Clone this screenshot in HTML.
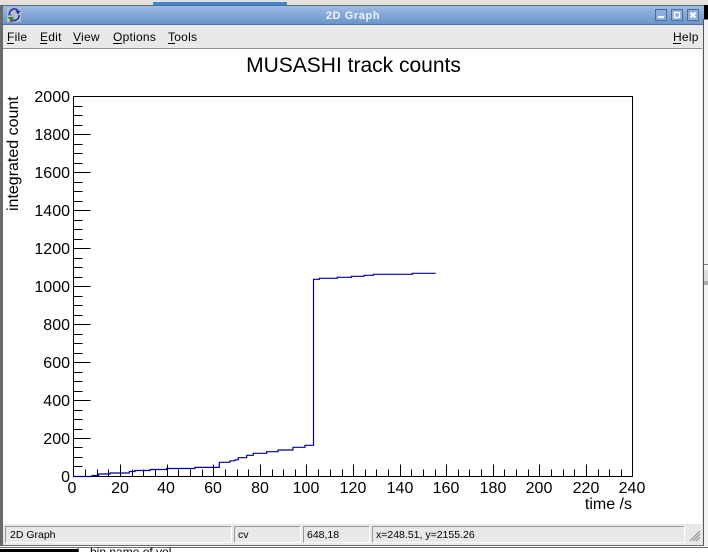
<!DOCTYPE html>
<html>
<head>
<meta charset="utf-8">
<style>
html,body{margin:0;padding:0;width:708px;height:552px;overflow:hidden;background:#e4e0da}
svg{display:block;position:absolute;left:0;top:0}
text{font-family:"Liberation Sans",sans-serif;fill:#000}
</style>
</head>
<body>
<svg width="708" height="552" viewBox="0 0 708 552" xmlns="http://www.w3.org/2000/svg">
<defs>
<linearGradient id="tb" x1="0" y1="0" x2="0" y2="1">
<stop offset="0" stop-color="#9dbbe4"/>
<stop offset="1" stop-color="#6c94c8"/>
</linearGradient>
</defs>
<!-- desktop -->
<rect x="0" y="0" width="708" height="552" fill="#e4e0da"/>
<rect x="153" y="2" width="134" height="3" fill="#3d86dc"/>
<rect x="704" y="5" width="4" height="14" fill="#000"/>
<rect x="704" y="19" width="4" height="533" fill="#f2f2f2"/>
<rect x="704" y="19" width="4" height="1" fill="#777"/>
<rect x="704" y="264" width="4" height="1" fill="#777"/>
<rect x="704" y="270" width="4" height="11" fill="#ddd"/>
<rect x="704" y="281" width="4" height="4" fill="#aaa"/>
<!-- window -->
<rect x="0" y="5" width="704" height="543" fill="#e8e8e8"/>
<rect x="0" y="5" width="704" height="1" fill="#5d6a7c"/>
<rect x="0" y="6" width="704" height="18" fill="url(#tb)"/>
<rect x="0" y="24" width="704" height="1" fill="#4f74a6"/>
<rect x="0" y="6" width="3" height="542" fill="#6a6a6a"/>
<rect x="703" y="19" width="1" height="529" fill="#555"/>
<!-- icon -->
<rect x="7" y="8" width="14" height="14" fill="#b9bdc4"/>
<path d="M9.5 15a5 5 0 0 1 8.5-4.5M19 15a5 5 0 0 1-8.5 4" fill="none" stroke="#1a2fb0" stroke-width="1.6"/>
<path d="M16 11h4l-2 3zM8 15h4" fill="#1a2fb0" stroke="#1a2fb0" stroke-width=".6"/>
<path d="M8 17h6l-1 2H9z" fill="#149a20"/>
<rect x="10" y="19" width="2" height="3" fill="#a04a10"/>
<text x="353" y="19" text-anchor="middle" font-size="11" font-weight="bold" style="fill:#eef3fa;letter-spacing:.6px">2D Graph</text>
<!-- window buttons -->
<g fill="none" stroke="#4a6f9f" stroke-width="1">
<rect x="655.5" y="9.5" width="11" height="11" fill="#8eaedb"/>
<rect x="671.5" y="9.5" width="11" height="11" fill="#8eaedb"/>
<rect x="687.5" y="9.5" width="11" height="11" fill="#8eaedb"/>
</g>
<rect x="658" y="16" width="6" height="2" fill="#fff"/>
<rect x="674.5" y="12.5" width="5" height="5" fill="none" stroke="#fff" stroke-width="1.4"/>
<path d="M690.5 12.5l5 5M695.5 12.5l-5 5" stroke="#fff" stroke-width="2.2" fill="none"/>
<!-- menu -->
<rect x="3" y="25" width="700" height="23" fill="#e8e8e8"/>
<g font-size="12" style="letter-spacing:.25px">
<text x="7" y="41">File</text>
<text x="40" y="41">Edit</text>
<text x="73" y="41">View</text>
<text x="113" y="41">Options</text>
<text x="168" y="41">Tools</text>
<text x="673" y="41">Help</text>
</g>
<g fill="#000">
<rect x="7" y="43" width="7" height="1"/>
<rect x="40" y="43" width="7" height="1"/>
<rect x="73" y="43" width="8" height="1"/>
<rect x="113" y="43" width="9" height="1"/>
<rect x="168" y="43" width="7" height="1"/>
<rect x="673" y="43" width="8" height="1"/>
</g>
<rect x="3" y="48" width="699" height="1" fill="#8c8c8c"/>
<!-- canvas -->
<rect x="3" y="49" width="699" height="475" fill="#fff"/>
<text x="353.5" y="72" text-anchor="middle" font-size="21">MUSASHI track counts</text>
<!-- axes -->
<rect x="73.5" y="96.5" width="559" height="380" fill="none" stroke="#000" stroke-width="1"/>
<path fill="none" stroke="#000" stroke-width="1" d="
M73.5 134.5h17M73.5 106.5h9M73.5 115.5h9M73.5 125.5h9
M73.5 144.5h9M73.5 153.5h9M73.5 163.5h9
M73.5 172.5h17M73.5 182.5h9M73.5 191.5h9M73.5 201.5h9
M73.5 210.5h17M73.5 220.5h9M73.5 229.5h9M73.5 239.5h9
M73.5 248.5h17M73.5 258.5h9M73.5 267.5h9M73.5 277.5h9
M73.5 286.5h17M73.5 296.5h9M73.5 305.5h9M73.5 315.5h9
M73.5 324.5h17M73.5 334.5h9M73.5 343.5h9M73.5 353.5h9
M73.5 362.5h17M73.5 372.5h9M73.5 381.5h9M73.5 391.5h9
M73.5 400.5h17M73.5 410.5h9M73.5 419.5h9M73.5 429.5h9
M73.5 438.5h17M73.5 447.5h9M73.5 457.5h9M73.5 466.5h9
M85.5 476.5v-7M97.5 476.5v-7M108.5 476.5v-7M120.5 476.5v-12
M132.5 476.5v-7M143.5 476.5v-7M155.5 476.5v-7M167.5 476.5v-12
M178.5 476.5v-7M190.5 476.5v-7M202.5 476.5v-7M213.5 476.5v-12
M225.5 476.5v-7M237.5 476.5v-7M248.5 476.5v-7M260.5 476.5v-12
M272.5 476.5v-7M283.5 476.5v-7M295.5 476.5v-7M306.5 476.5v-12
M318.5 476.5v-7M330.5 476.5v-7M342.5 476.5v-7M353.5 476.5v-12
M365.5 476.5v-7M376.5 476.5v-7M388.5 476.5v-7M400.5 476.5v-12
M411.5 476.5v-7M423.5 476.5v-7M435.5 476.5v-7M446.5 476.5v-12
M458.5 476.5v-7M469.5 476.5v-7M481.5 476.5v-7M493.5 476.5v-12
M504.5 476.5v-7M516.5 476.5v-7M528.5 476.5v-7M539.5 476.5v-12
M551.5 476.5v-7M563.5 476.5v-7M574.5 476.5v-7M586.5 476.5v-12
M598.5 476.5v-7M609.5 476.5v-7M621.5 476.5v-7"/>
<!-- y labels -->
<g font-size="16" text-anchor="end">
<text x="70" y="102">2000</text>
<text x="70" y="140">1800</text>
<text x="70" y="178">1600</text>
<text x="70" y="216">1400</text>
<text x="70" y="254">1200</text>
<text x="70" y="292">1000</text>
<text x="70" y="330">800</text>
<text x="70" y="368">600</text>
<text x="70" y="406">400</text>
<text x="70" y="444">200</text>
<text x="70" y="482">0</text>
</g>
<!-- x labels -->
<g font-size="16" text-anchor="middle">
<text x="72" y="493">0</text>
<text x="120" y="493">20</text>
<text x="166" y="493">40</text>
<text x="213" y="493">60</text>
<text x="260" y="493">80</text>
<text x="306" y="493">100</text>
<text x="353" y="493">120</text>
<text x="400" y="493">140</text>
<text x="446" y="493">160</text>
<text x="493" y="493">180</text>
<text x="539" y="493">200</text>
<text x="586" y="493">220</text>
<text x="632" y="493">240</text>
</g>
<text x="632" y="509" text-anchor="end" font-size="16">time /s</text>
<text transform="translate(18,211) rotate(-90)" font-size="16">integrated count</text>
<!-- curve -->
<path fill="none" stroke="#00009c" stroke-width="1.2" d="M73.5 476.5H92V475.5H98.7V474H110V473H129.3V471.5H135V470.5H150V469.5H166.7V468.5H195V467.4H219.3V462.3H230V460.8H235V459.8H238.3V457.7H246.7V455.3H253.3V453.3H266.7V451.7H278V450H293V447.3H305V445.3H313.5V279.3H319.3V278.3H337.3V277.3H351.3V276.3H364V275.3H373.3V274.3H412.3V273.3H435.7"/>
<!-- status bar -->
<rect x="3" y="524" width="699" height="21" fill="#e8e8e8"/>
<g fill="#e8e8e8" stroke-width="1">
<path d="M5.5 543V526.5H231" fill="none" stroke="#9a9a9a"/>
<path d="M231.5 526.5V542.5H5.5" fill="none" stroke="#fff"/>
<path d="M234.5 543V526.5H300" fill="none" stroke="#9a9a9a"/>
<path d="M300.5 526.5V542.5H234.5" fill="none" stroke="#fff"/>
<path d="M303.5 543V526.5H369" fill="none" stroke="#9a9a9a"/>
<path d="M369.5 526.5V542.5H303.5" fill="none" stroke="#fff"/>
<path d="M372.5 543V526.5H684" fill="none" stroke="#9a9a9a"/>
<path d="M684.5 526.5V542.5H372.5" fill="none" stroke="#fff"/>
</g>
<g font-size="10.5">
<text x="10" y="538">2D Graph</text>
<text x="238" y="538">cv</text>
<text x="307" y="538">648,18</text>
<text x="376" y="538">x=248.51, y=2155.26</text>
</g>
<path d="M700 531L690 541M700 534L693 541M700 537L696 541" stroke="#8a8a8a" stroke-width="1" fill="none"/>
<!-- bottom -->
<rect x="0" y="545" width="704" height="1" fill="#6f6f6f"/>
<rect x="0" y="546" width="708" height="6" fill="#fff"/>
<rect x="0" y="547" width="708" height="1" fill="#6f6f6f"/>
<rect x="0" y="549" width="78" height="3" fill="#000"/>
<rect x="78" y="548" width="1" height="4" fill="#555"/>
<text x="90" y="556" font-size="12">bin name of vol</text>
</svg>
</body>
</html>
